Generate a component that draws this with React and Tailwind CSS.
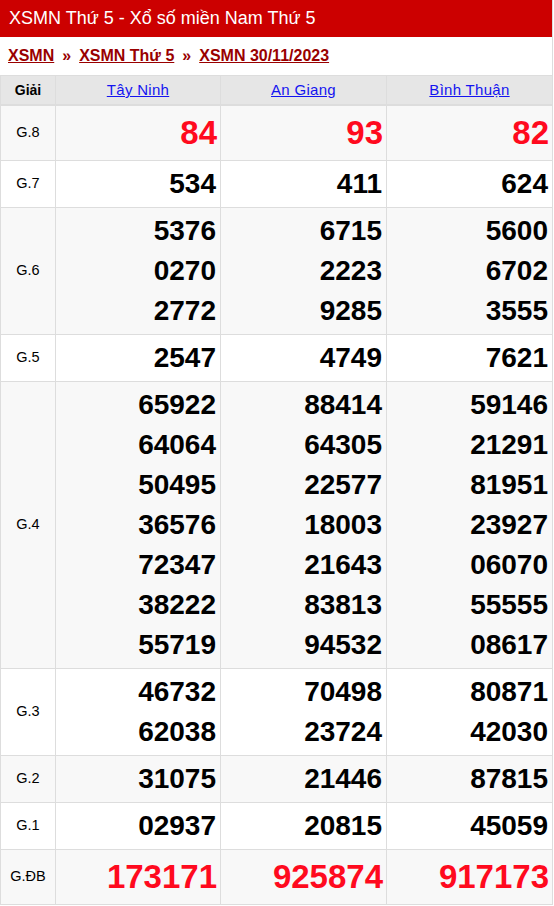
import React from "react";

const rows = [
  { label: "G.8", big: true, red: true, lines: [["84"], ["93"], ["82"]] },
  { label: "G.7", lines: [["534"], ["411"], ["624"]] },
  { label: "G.6", lines: [["5376", "0270", "2772"], ["6715", "2223", "9285"], ["5600", "6702", "3555"]] },
  { label: "G.5", lines: [["2547"], ["4749"], ["7621"]] },
  {
    label: "G.4",
    lines: [
      ["65922", "64064", "50495", "36576", "72347", "38222", "55719"],
      ["88414", "64305", "22577", "18003", "21643", "83813", "94532"],
      ["59146", "21291", "81951", "23927", "06070", "55555", "08617"],
    ],
  },
  { label: "G.3", lines: [["46732", "62038"], ["70498", "23724"], ["80871", "42030"]] },
  { label: "G.2", lines: [["31075"], ["21446"], ["87815"]] },
  { label: "G.1", lines: [["02937"], ["20815"], ["45059"]] },
  { label: "G.ĐB", big: true, red: true, lines: [["173171"], ["925874"], ["917173"]] },
];

export default function App() {
  return (
    <div
      className="w-[553px] border-r border-[#dddddd] bg-white"
      style={{ fontFamily: '"Liberation Sans", Arial, sans-serif' }}
    >
      <div className="h-[37px] bg-[#cc0000] flex items-center pl-[9px] text-white text-[18px]">
        XSMN Thứ 5 - Xổ số miền Nam Thứ 5
      </div>
      <div className="h-[38px] flex items-center pl-[8px] text-[16px] font-bold text-[#990000]">
        <a className="underline" href="#">XSMN</a>
        <span className="px-[8px]">»</span>
        <a className="underline" href="#">XSMN Thứ 5</a>
        <span className="px-[8px]">»</span>
        <a className="underline" href="#">XSMN 30/11/2023</a>
      </div>
      <div className="border-l border-t border-[#dddddd]">
        <div className="grid grid-cols-[55px_165px_166px_165px] bg-[#e6e6e6] border-b-2 border-[#dddddd] h-[30px]">
          <div className="border-r border-[#dddddd] flex items-center justify-center text-[14px] font-bold text-black">
            Giải
          </div>
          {["Tây Ninh", "An Giang", "Bình Thuận"].map((n, i) => (
            <div
              key={n}
              className={`flex items-center justify-center ${i < 2 ? "border-r border-[#dddddd]" : ""}`}
            >
              <a href="#" className="underline text-[15px] tracking-[0.3px] text-[#1414f0]">
                {n}
              </a>
            </div>
          ))}
        </div>
        {rows.map((r, ri) => (
          <div
            key={r.label}
            className={`grid grid-cols-[55px_165px_166px_165px] border-b border-[#dddddd] ${
              ri % 2 === 0 ? "bg-[#f8f8f8]" : "bg-white"
            }`}
          >
            <div className="border-r border-[#dddddd] flex items-center justify-center text-[14.5px] text-black">
              {r.label}
            </div>
            {r.lines.map((col, ci) => (
              <div
                key={ci}
                className={`py-[3px] flex flex-col items-end ${r.big ? "pr-[3px]" : "pr-[4px]"} ${
                  ci < 2 ? "border-r border-[#dddddd]" : ""
                }`}
              >
                {col.map((num, k) => (
                  <div
                    key={k}
                    className={
                      r.big
                        ? "h-[48px] leading-[48px] text-[33px] font-bold text-[#ff0a1e]"
                        : "h-[40px] leading-[40px] text-[28px] font-bold text-black"
                    }
                  >
                    {num}
                  </div>
                ))}
              </div>
            ))}
          </div>
        ))}
      </div>
    </div>
  );
}
